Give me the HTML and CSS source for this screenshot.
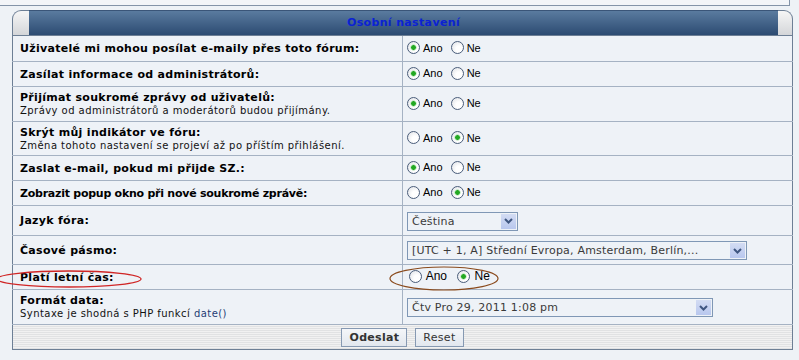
FILE: index.html
```html
<!DOCTYPE html>
<html lang="cs">
<head>
    <meta charset="UTF-8">
    <title>Osobní nastavení</title>
    <link rel="stylesheet" href="styles.css">
</head>
<body>
<div class="page">
    <div class="top-strip"></div>

    <form class="panel" onsubmit="return false;">
        <div class="panel-head">
            <span class="cap cap-left"></span>
            <h2 class="panel-title">Osobní nastavení</h2>
            <span class="cap cap-right"></span>
        </div>

        <table class="settings">
            <colgroup>
                <col class="col-label">
                <col>
            </colgroup>
            <tr class="row-radio row-first">
                <td class="label"><b>Uživatelé mi mohou posílat e-maily přes toto fórum:</b></td>
                <td class="field">
                    <label class="opt"><input type="radio" name="viewemail" checked>Ano</label>
                    <label class="opt"><input type="radio" name="viewemail">Ne</label>
                </td>
            </tr>
            <tr class="row-radio">
                <td class="label"><b>Zasílat informace od administrátorů:</b></td>
                <td class="field">
                    <label class="opt"><input type="radio" name="massemail" checked>Ano</label>
                    <label class="opt"><input type="radio" name="massemail">Ne</label>
                </td>
            </tr>
            <tr class="row-double">
                <td class="label"><b>Přijímat soukromé zprávy od uživatelů:</b><span class="desc">Zprávy od administrátorů a moderátorů budou přijímány.</span></td>
                <td class="field">
                    <label class="opt"><input type="radio" name="allowpm" checked>Ano</label>
                    <label class="opt"><input type="radio" name="allowpm">Ne</label>
                </td>
            </tr>
            <tr class="row-double row-short">
                <td class="label"><b>Skrýt můj indikátor ve fóru:</b><span class="desc">Změna tohoto nastavení se projeví až po příštím přihlášení.</span></td>
                <td class="field">
                    <label class="opt"><input type="radio" name="hideonline">Ano</label>
                    <label class="opt"><input type="radio" name="hideonline" checked>Ne</label>
                </td>
            </tr>
            <tr class="row-radio">
                <td class="label"><b>Zaslat e-mail, pokud mi přijde SZ.:</b></td>
                <td class="field">
                    <label class="opt"><input type="radio" name="notifypm" checked>Ano</label>
                    <label class="opt"><input type="radio" name="notifypm">Ne</label>
                </td>
            </tr>
            <tr class="row-radio">
                <td class="label"><b class="tight">Zobrazit popup okno při nové soukromé zprávě:</b></td>
                <td class="field">
                    <label class="opt"><input type="radio" name="popuppm">Ano</label>
                    <label class="opt"><input type="radio" name="popuppm" checked>Ne</label>
                </td>
            </tr>
            <tr class="row-select">
                <td class="label"><b>Jazyk fóra:</b></td>
                <td class="field">
                    <div class="select select-lang">
                        <select name="lang"><option>Čeština</option></select>
                        <span class="select-arrow"><svg width="9" height="6" viewBox="0 0 9 6"><path d="M1 1 L4.5 4.5 L8 1" fill="none" stroke="#3f5680" stroke-width="2"/></svg></span>
                    </div>
                </td>
            </tr>
            <tr class="row-select row-short">
                <td class="label"><b>Časové pásmo:</b></td>
                <td class="field">
                    <div class="select select-tz">
                        <select name="tz"><option>[UTC + 1, A] Střední Evropa, Amsterdam, Berlín,...</option></select>
                        <span class="select-arrow"><svg width="9" height="6" viewBox="0 0 9 6"><path d="M1 1 L4.5 4.5 L8 1" fill="none" stroke="#3f5680" stroke-width="2"/></svg></span>
                    </div>
                </td>
            </tr>
            <tr class="row-radio">
                <td class="label"><b>Platí letní čas:</b></td>
                <td class="field field-dst">
                    <label class="opt"><input type="radio" name="dst"> Ano</label>
                    <label class="opt"><input type="radio" name="dst" checked> Ne</label>
                </td>
            </tr>
            <tr class="row-double">
                <td class="label"><b>Formát data:</b><span class="desc">Syntaxe je shodná s PHP funkcí <a href="#">date()</a></span></td>
                <td class="field">
                    <div class="select select-date">
                        <select name="dateformat"><option>Čtv Pro 29, 2011 1:08 pm</option></select>
                        <span class="select-arrow"><svg width="9" height="6" viewBox="0 0 9 6"><path d="M1 1 L4.5 4.5 L8 1" fill="none" stroke="#3f5680" stroke-width="2"/></svg></span>
                    </div>
                </td>
            </tr>
        </table>

        <div class="panel-foot">
            <button type="submit" class="btn btn-main">Odeslat</button>
            <button type="reset" class="btn">Reset</button>
        </div>
    </form>

    <!-- ručně dokreslené značky ze screenshotu -->
    <svg class="marks" width="799" height="360" viewBox="0 0 799 360">
        <ellipse cx="69" cy="279" rx="72" ry="8" fill="none" stroke="#d02626" stroke-width="1.3"/>
        <ellipse cx="444" cy="278.5" rx="54" ry="11.5" fill="none" stroke="#8a4a1c" stroke-width="1.2"/>
    </svg>
</div>
</body>
</html>
```

FILE: styles.css
```css
html, body {
    margin: 0;
    padding: 0;
    background-color: #eef2f6;
    font-family: "DejaVu Sans", Verdana, sans-serif;
    color: #000;
}

.page {
    position: relative;
    width: 799px;
    height: 360px;
    overflow: hidden;
}

.top-strip {
    width: 789px;
    height: 5px;
    background-color: #f3f5f8;
    border-bottom: 1px solid #8494a8;
    border-right: 1px solid #8494a8;
}

.panel {
    margin: 4px 0 0 12px;
    width: 781px;
}

/* hlavička panelu */
.panel-head {
    display: flex;
    height: 26px;
    box-sizing: border-box;
    border-bottom: 1px solid #6d7f95;
}

.cap {
    box-sizing: border-box;
    border-top: 1px solid #6d7f95;
    background: linear-gradient(#f6f6f6, #d4d6d9);
}

.cap-left {
    width: 17px;
    border-left: 1px solid #6d7f95;
    border-top-left-radius: 9px;
}

.cap-right {
    width: 15px;
    border-right: 1px solid #6d7f95;
    border-top-right-radius: 9px;
}

.panel-title {
    flex: 1;
    margin: 0;
    box-sizing: border-box;
    border-top: 1px solid #3a5578;
    background: linear-gradient(#5a7b9f, #2c4b72);
    text-align: center;
    font-size: 11px;
    font-weight: bold;
    letter-spacing: 0.35px;
    line-height: 23px;
    color: #0b22d4;
}

/* tabulka nastavení */
.settings {
    width: 781px;
    table-layout: fixed;
    border-collapse: collapse;
    background-color: #eef2f7;
    border-left: 1px solid #6d7f95;
    border-right: 1px solid #6d7f95;
}

.col-label {
    width: 390px;
}

.settings td {
    padding: 0;
    border-bottom: 1px solid #a5b2c3;
    vertical-align: middle;
}

.settings td.label {
    padding-left: 7px;
    border-right: 1px solid #a5b2c3;
    font-size: 11px;
    letter-spacing: 0.3px;
    line-height: 13px;
}

.settings td.label .tight {
    letter-spacing: -0.25px;
}

.settings td.field {
    padding-left: 4px;
}

.row-radio td {
    height: 24px;
}

.row-first td {
    height: 25px;
}

.row-double td {
    height: 34px;
}

.row-double.row-short td {
    height: 33px;
}

.row-select td {
    height: 29px;
}

.row-select.row-short td {
    height: 28px;
}

.desc {
    display: block;
    font-size: 10px;
    letter-spacing: 0.45px;
    line-height: 13px;
    color: #111;
}

.desc a {
    color: #1f3d75;
    text-decoration: none;
}

/* přepínače */
.opt {
    display: inline-flex;
    align-items: center;
    margin-right: 3px;
    font-family: "Liberation Sans", Arial, sans-serif;
    font-size: 11px;
    letter-spacing: 0;
    color: #000;
    white-space: pre;
}

.opt input[type="radio"] {
    appearance: none;
    -webkit-appearance: none;
    box-sizing: border-box;
    width: 13px;
    height: 13px;
    margin: 0 3px 0 0;
    border: 1px solid #4a5d7a;
    border-radius: 50%;
    background: radial-gradient(circle at 65% 65%, #ffffff 30%, #dcdfe4 100%);
}

.opt input[type="radio"]:checked {
    background:
        radial-gradient(circle, #23a823 0 2px, #9fdc9f 2.5px, transparent 3.5px),
        radial-gradient(circle at 65% 65%, #ffffff 30%, #dcdfe4 100%);
}

.field-dst .opt {
    margin-right: 5px;
    font-size: 12px;
}

.field-dst .opt:first-child {
    margin-left: 2px;
}

.field-dst .opt input[type="radio"] {
    margin-right: 1px;
}

/* rozbalovací seznamy */
.select {
    display: inline-flex;
    box-sizing: border-box;
    height: 19px;
    border: 1px solid #7f97b5;
    background-color: #eef2f7;
    vertical-align: middle;
}

.select select {
    appearance: none;
    -webkit-appearance: none;
    flex: 1;
    min-width: 0;
    border: 0;
    padding: 0 0 0 4px;
    background: transparent;
    font-family: "DejaVu Sans", Verdana, sans-serif;
    font-size: 11px;
    letter-spacing: 0.2px;
    color: #3a3a3a;
    outline: none;
}

.select-arrow {
    display: flex;
    align-items: center;
    justify-content: center;
    width: 15px;
    margin: 1px;
    background: linear-gradient(#d3dcf3, #b8c7ee);
}

.select-lang {
    width: 111px;
}

.select-tz {
    width: 340px;
}

.select-date {
    width: 306px;
}

/* patička s tlačítky */
.panel-foot {
    display: flex;
    justify-content: center;
    align-items: center;
    gap: 8px;
    height: 25px;
    padding-top: 1px;
    box-sizing: border-box;
    border: 1px solid #6d7f95;
    border-top: 0;
    background: repeating-linear-gradient(#f1f1f1 0 1px, #e1e2e3 1px 2px);
}

.btn {
    box-sizing: border-box;
    height: 19px;
    padding: 0 7px;
    border: 1px solid #8699b2;
    background: linear-gradient(#f4f6f9, #e2e7ee);
    font-family: "DejaVu Sans", Verdana, sans-serif;
    font-size: 11px;
    letter-spacing: 0.3px;
    color: #333;
    cursor: pointer;
}

.btn-main {
    font-weight: bold;
}

.marks {
    position: absolute;
    top: 0;
    left: 0;
    pointer-events: none;
}
```
